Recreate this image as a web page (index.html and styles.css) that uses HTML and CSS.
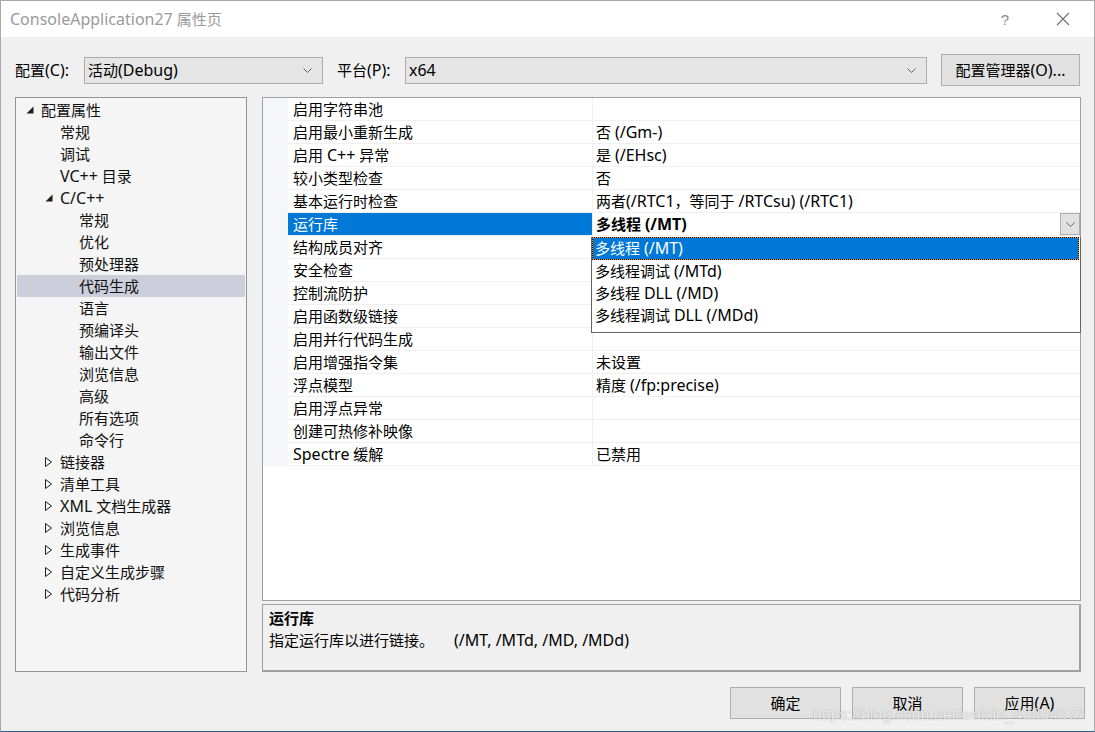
FILE: index.html
```html
<!DOCTYPE html>
<html lang="zh-CN">
<head>
<meta charset="utf-8">
<title>ConsoleApplication27 属性页</title>
<link rel="stylesheet" href="styles.css">
</head>
<body>
<div class="window">
  <div class="titlebar">
    <span class="title"><span class="en">ConsoleApplication27</span> 属性页</span>
    <div class="tb-controls">
      <span class="tb-btn help">?</span>
      <span class="tb-btn close">
        <svg width="14" height="14" viewBox="0 0 14 14"><path d="M1 1 L13 13 M13 1 L1 13" stroke="#6d6d6d" stroke-width="1.1" fill="none"/></svg>
      </span>
    </div>
  </div>

  <div class="config-row">
    <span class="lbl lbl-config">配置<span class="en">(C):</span></span>
    <div class="combo combo-config">
      <span>活动<span class="en">(Debug)</span></span>
      <svg class="chev" width="9" height="5" viewBox="0 0 9 5"><path d="M0.5 0.5 L4.5 4.5 L8.5 0.5" stroke="#606060" fill="none"/></svg>
    </div>
    <span class="lbl lbl-platform">平台<span class="en">(P):</span></span>
    <div class="combo combo-platform">
      <span class="en">x64</span>
      <svg class="chev" width="9" height="5" viewBox="0 0 9 5"><path d="M0.5 0.5 L4.5 4.5 L8.5 0.5" stroke="#606060" fill="none"/></svg>
    </div>
    <button class="btn btn-mgr">配置管理器<span class="en">(O)...</span></button>
  </div>

  <div class="main">
    <div class="tree">
      <div class="trow l0"><span class="tog"><svg width="8" height="8" viewBox="0 0 8 8"><polygon points="7.5,0.5 7.5,7.5 0.5,7.5" fill="#1e1e1e"/></svg></span>配置属性</div>
      <div class="trow l1"><span class="tog"></span>常规</div>
      <div class="trow l1"><span class="tog"></span>调试</div>
      <div class="trow l1"><span class="tog"></span><span class="en">VC++</span>&nbsp;目录</div>
      <div class="trow l1"><span class="tog"><svg width="8" height="8" viewBox="0 0 8 8"><polygon points="7.5,0.5 7.5,7.5 0.5,7.5" fill="#1e1e1e"/></svg></span><span class="en">C/C++</span></div>
      <div class="trow l2"><span class="tog"></span>常规</div>
      <div class="trow l2"><span class="tog"></span>优化</div>
      <div class="trow l2"><span class="tog"></span>预处理器</div>
      <div class="trow l2 sel"><span class="tog"></span>代码生成</div>
      <div class="trow l2"><span class="tog"></span>语言</div>
      <div class="trow l2"><span class="tog"></span>预编译头</div>
      <div class="trow l2"><span class="tog"></span>输出文件</div>
      <div class="trow l2"><span class="tog"></span>浏览信息</div>
      <div class="trow l2"><span class="tog"></span>高级</div>
      <div class="trow l2"><span class="tog"></span>所有选项</div>
      <div class="trow l2"><span class="tog"></span>命令行</div>
      <div class="trow l1"><span class="tog"><svg width="8" height="10" viewBox="0 0 8 10"><polygon points="0.5,0.5 6.5,5 0.5,9.5" fill="none" stroke="#1e1e1e"/></svg></span>链接器</div>
      <div class="trow l1"><span class="tog"><svg width="8" height="10" viewBox="0 0 8 10"><polygon points="0.5,0.5 6.5,5 0.5,9.5" fill="none" stroke="#1e1e1e"/></svg></span>清单工具</div>
      <div class="trow l1"><span class="tog"><svg width="8" height="10" viewBox="0 0 8 10"><polygon points="0.5,0.5 6.5,5 0.5,9.5" fill="none" stroke="#1e1e1e"/></svg></span><span class="en">XML</span>&nbsp;文档生成器</div>
      <div class="trow l1"><span class="tog"><svg width="8" height="10" viewBox="0 0 8 10"><polygon points="0.5,0.5 6.5,5 0.5,9.5" fill="none" stroke="#1e1e1e"/></svg></span>浏览信息</div>
      <div class="trow l1"><span class="tog"><svg width="8" height="10" viewBox="0 0 8 10"><polygon points="0.5,0.5 6.5,5 0.5,9.5" fill="none" stroke="#1e1e1e"/></svg></span>生成事件</div>
      <div class="trow l1"><span class="tog"><svg width="8" height="10" viewBox="0 0 8 10"><polygon points="0.5,0.5 6.5,5 0.5,9.5" fill="none" stroke="#1e1e1e"/></svg></span>自定义生成步骤</div>
      <div class="trow l1"><span class="tog"><svg width="8" height="10" viewBox="0 0 8 10"><polygon points="0.5,0.5 6.5,5 0.5,9.5" fill="none" stroke="#1e1e1e"/></svg></span>代码分析</div>
    </div>

    <div class="right">
      <div class="grid">
        <div class="prow"><span class="gut"></span><span class="pname">启用字符串池</span><span class="pval"></span></div>
        <div class="prow"><span class="gut"></span><span class="pname">启用最小重新生成</span><span class="pval">否 <span class="en">(/Gm-)</span></span></div>
        <div class="prow"><span class="gut"></span><span class="pname">启用 <span class="en">C++</span> 异常</span><span class="pval">是 <span class="en">(/EHsc)</span></span></div>
        <div class="prow"><span class="gut"></span><span class="pname">较小类型检查</span><span class="pval">否</span></div>
        <div class="prow"><span class="gut"></span><span class="pname">基本运行时检查</span><span class="pval">两者<span class="en">(/RTC1</span>，等同于 <span class="en">/RTCsu) (/RTC1)</span></span></div>
        <div class="prow sel"><span class="gut"></span><span class="pname">运行库</span><span class="pval"><b>多线程 <span class="en">(/MT)</span></b><span class="ddbtn"><svg width="9" height="5" viewBox="0 0 9 5"><path d="M0.5 0.5 L4.5 4.5 L8.5 0.5" stroke="#606060" fill="none"/></svg></span></span></div>
        <div class="prow"><span class="gut"></span><span class="pname">结构成员对齐</span><span class="pval"></span></div>
        <div class="prow"><span class="gut"></span><span class="pname">安全检查</span><span class="pval"></span></div>
        <div class="prow"><span class="gut"></span><span class="pname">控制流防护</span><span class="pval"></span></div>
        <div class="prow"><span class="gut"></span><span class="pname">启用函数级链接</span><span class="pval"></span></div>
        <div class="prow"><span class="gut"></span><span class="pname">启用并行代码生成</span><span class="pval"></span></div>
        <div class="prow"><span class="gut"></span><span class="pname">启用增强指令集</span><span class="pval">未设置</span></div>
        <div class="prow"><span class="gut"></span><span class="pname">浮点模型</span><span class="pval">精度 <span class="en">(/fp:precise)</span></span></div>
        <div class="prow"><span class="gut"></span><span class="pname">启用浮点异常</span><span class="pval"></span></div>
        <div class="prow"><span class="gut"></span><span class="pname">创建可热修补映像</span><span class="pval"></span></div>
        <div class="prow"><span class="gut"></span><span class="pname"><span class="en">Spectre</span> 缓解</span><span class="pval">已禁用</span></div>

        <div class="droplist">
          <div class="dd-item dd-sel">多线程 <span class="en">(/MT)</span></div>
          <div class="dd-item">多线程调试 <span class="en">(/MTd)</span></div>
          <div class="dd-item">多线程 <span class="en">DLL (/MD)</span></div>
          <div class="dd-item">多线程调试 <span class="en">DLL (/MDd)</span></div>
        </div>
      </div>
      <div class="desc">
        <div class="desc-title">运行库</div>
        <div class="desc-text">指定运行库以进行链接。<span class="desc-flags en">(/MT, /MTd, /MD, /MDd)</span></div>
      </div>
    </div>
  </div>

  <div class="footer">
    <button class="btn btn-foot">确定</button>
    <button class="btn btn-foot">取消</button>
    <button class="btn btn-foot">应用<span class="en">(A)</span></button>
  </div>

  <div class="watermark">https://blog.csdn.net/weixin_43894577</div>
</div>
</body>
</html>
```

FILE: styles.css
```css
* { box-sizing: border-box; }
html, body { margin: 0; padding: 0; }
body {
  font-family: "Noto Sans", "Noto Sans CJK SC", sans-serif;
  font-size: 15px;
  color: #000;
  background: #f0f0f0;
}
.en { font-size: 16px; }

.window {
  width: 1095px;
  height: 732px;
  border: 1px solid #a9a9a9;
  border-bottom-color: #2f5f8c;
  background: #f0f0f0;
  position: relative;
  display: flex;
  flex-direction: column;
  overflow: hidden;
}

/* title bar */
.titlebar {
  height: 36px;
  flex: none;
  background: #fff;
  display: flex;
  align-items: center;
  justify-content: space-between;
  padding-left: 9px;
}
.title { color: #9a9a9a; font-size: 15px; line-height: 20px; }
.tb-controls { display: flex; align-items: center; margin-right: 2px; }
.tb-btn {
  width: 58px;
  height: 36px;
  display: flex;
  align-items: center;
  justify-content: center;
}
.help { color: #8a8a8a; font-size: 15px; font-family: "Liberation Sans", sans-serif; }

/* config row */
.config-row {
  display: flex;
  align-items: center;
  height: 32px;
  margin: 17px 0 0 14px;
  flex: none;
}
.lbl { line-height: 20px; flex: none; white-space: nowrap; }
.lbl-config { width: 69px; }
.lbl-platform { width: 68px; margin-left: 14px; }
.combo {
  height: 27px;
  background: #e5e5e5;
  border: 1px solid #acacac;
  display: flex;
  align-items: center;
  justify-content: space-between;
  padding: 0 10px 0 3px;
  line-height: 20px;
  flex: none;
}
.combo-config { width: 239px; }
.combo-platform { width: 522px; }
.btn {
  font: inherit;
  color: #000;
  background: #e1e1e1;
  border: 1px solid #adadad;
  padding: 0;
  height: 32px;
  line-height: 20px;
  white-space: nowrap;
}
.btn-mgr { width: 139px; margin-left: 14px; }

/* main area */
.main {
  display: flex;
  gap: 15px;
  height: 575px;
  margin: 11px 13px 0 14px;
  flex: none;
}

.tree {
  width: 232px;
  flex: none;
  border: 1px solid #939393;
  background: #f5f5f5;
  padding: 1px;
}
.trow {
  display: flex;
  align-items: center;
  height: 22px;
  line-height: 22px;
  white-space: nowrap;
  color: #111;
}
.trow.l0 { padding-left: 9px; }
.trow.l1 { padding-left: 28px; }
.trow.l2 { padding-left: 47px; }
.trow.sel { background: #cccedb; }
.tog { width: 15px; flex: none; display: flex; align-items: center; }

.right {
  flex: 1;
  display: flex;
  flex-direction: column;
  gap: 3px;
  min-width: 0;
}

.grid {
  height: 504px;
  flex: none;
  border: 1px solid #a0a0a0;
  background: #fff;
  position: relative;
}
.prow {
  display: grid;
  grid-template-columns: 25px 304px 1fr;
  height: 23px;
}
.gut { background: #f4f6fa; }
.pname {
  padding-left: 5px;
  line-height: 22px;
  border-bottom: 1px solid #f0f0f0;
  white-space: nowrap;
}
.pval {
  padding-left: 3px;
  line-height: 22px;
  border-left: 1px solid #f0f0f0;
  border-bottom: 1px solid #f0f0f0;
  white-space: nowrap;
}
.prow.sel .pname { background: #0078d7; color: #fff; }
.prow.sel .pval {
  display: flex;
  justify-content: space-between;
  align-items: stretch;
}
.prow.sel .pval b { font-weight: 700; }
.ddbtn {
  width: 20px;
  background: #e1e1e1;
  border: 1px solid #adadad;
  display: flex;
  align-items: center;
  justify-content: center;
}

.droplist {
  position: absolute;
  left: 328px;
  top: 139px;
  width: 490px;
  height: 96px;
  background: #fff;
  border: 1px solid #646464;
  border-top: 0;
}
.dd-item {
  height: 22px;
  line-height: 22px;
  padding-left: 3px;
  white-space: nowrap;
}
.dd-item.dd-sel {
  height: 23px;
  background: #0078d7;
  color: #fff;
  margin: 0 1px 0 0;
  box-shadow: inset 0 0 0 1px #f7941d;
  outline: 1px dotted #000;
  outline-offset: -1px;
}

.desc {
  flex: 1;
  border: 1px solid #a0a0a0;
  border-right-width: 2px;
  border-bottom-width: 2px;
  background: #f0f0f0;
  padding: 2px 0 0 6px;
}
.desc-title { font-weight: 700; line-height: 22px; }
.desc-text { line-height: 22px; white-space: nowrap; }
.desc-flags { margin-left: 20px; }

/* footer */
.footer {
  display: flex;
  justify-content: flex-end;
  gap: 11px;
  margin: 15px 9px 0 0;
  flex: none;
}
.btn-foot { width: 111px; }

.watermark {
  position: absolute;
  right: 9px;
  bottom: 7px;
  font-family: "Liberation Sans", sans-serif;
  font-size: 16px;
  line-height: 18px;
  color: rgba(255, 255, 255, 0.8);
  text-shadow: 0 0 1px rgba(90, 90, 90, 0.6);
  pointer-events: none;
}
```
